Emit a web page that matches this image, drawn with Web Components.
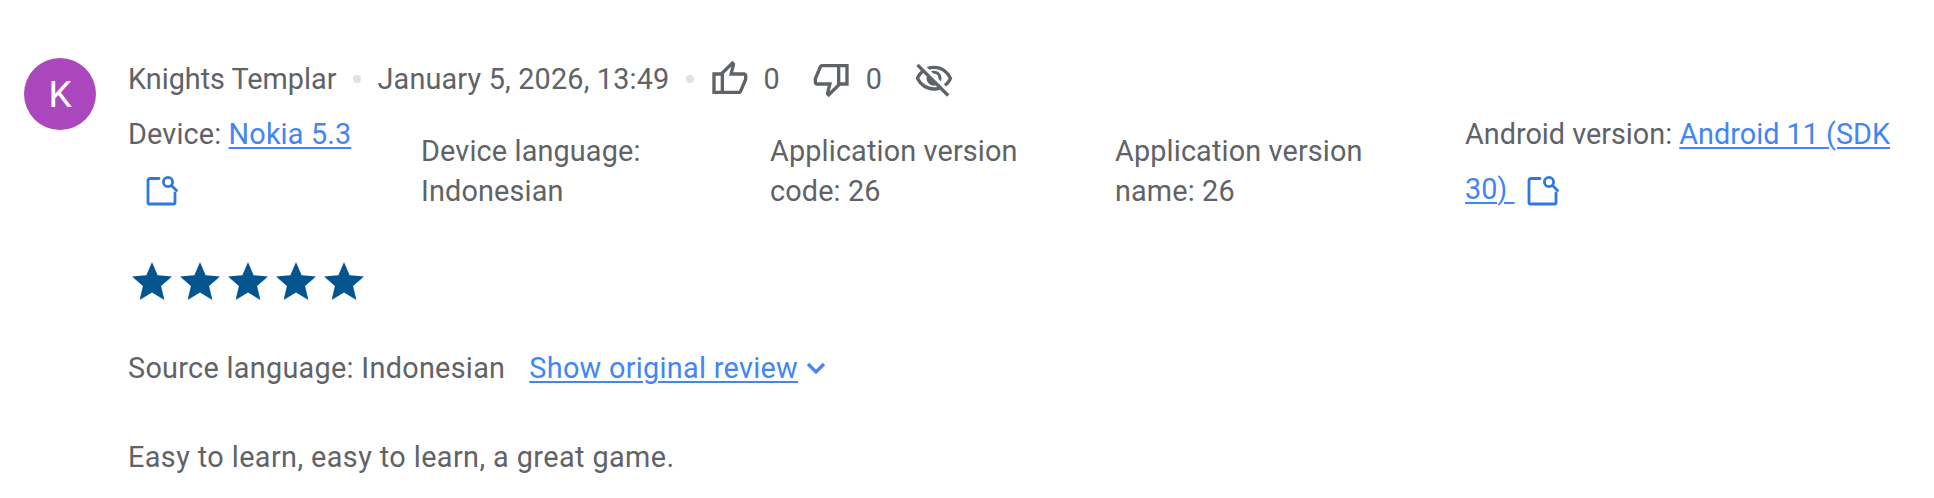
<!DOCTYPE html>
<html lang="en">
<head>
<meta charset="utf-8">
<title>Review</title>
<style>
  html, body { margin: 0; background: #fff; }
  body { font-family: Roboto, "Liberation Sans", sans-serif; color: #5f6368; }
</style>
</head>
<body>
<app-review
  author="Knights Templar"
  date="January 5, 2026, 13:49"
  likes="0"
  dislikes="0"
  stars="5"
  source="Indonesian">
  <meta-cell slot="meta" class="tall">Device: <a-link>Nokia 5.3 </a-link><search-icon></search-icon></meta-cell>
  <meta-cell slot="meta">Device language: Indonesian</meta-cell>
  <meta-cell slot="meta">Application version code: 26</meta-cell>
  <meta-cell slot="meta">Application version name: 26</meta-cell>
  <meta-cell slot="meta" class="tall last">Android version: <a-link>Android 11 (SDK 30) </a-link><search-icon style="--gap: 12px"></search-icon></meta-cell>
  Easy to learn, easy to learn, a great game.
</app-review>

<script>
const ICONS = {
  up: 'M720-120H280v-520l280-280 50 50q7 7 11.5 19t4.5 23v14l-44 174h258q32 0 56 24t24 56v80q0 7-2 15t-4 15L794-168q-9 20-30 34t-44 14Zm-360-80h360l120-280v-80H480l54-220-174 174v406Zm0-406v406-406Zm-80-34v80H160v360h120v80H80v-520h200Z',
  down: 'M240-840h440v520L400-40l-50-50q-7-7-11.5-19t-4.5-23v-14l44-174H120q-32 0-56-24t-24-56v-80q0-7 2-15t4-15l120-282q9-20 30-34t44-14Zm360 80H240L120-480v80h360l-54 220 174-174v-406Zm0 406v-406 406Zm80 34v-80h120v-360H680v-80h200v520H680Z',
  hidden: 'm644-428-58-58q9-47-27-88t-93-32l-58-58q17-8 34.5-12t37.5-4q75 0 127.5 52.5T660-500q0 20-4 37.5T644-428Zm128 126-58-56q38-29 67.5-63.5T832-500q-50-101-143.5-160.5T480-720q-29 0-57 4t-55 12l-62-62q41-17 84-25.5t90-8.5q151 0 269 83.5T920-500q-23 59-60.5 109.5T772-302Zm20 246L624-222q-35 11-70.5 16.5T480-200q-151 0-269-83.5T40-500q21-53 53-98.5t73-81.5L56-792l56-56 736 736-56 56ZM222-624q-29 26-53 57t-41 67q50 101 143.5 160.5T480-280q20 0 39-2.5t39-5.5l-36-38q-11 3-21 4.5t-21 1.5q-75 0-127.5-52.5T300-500q0-11 1.5-21t4.5-21l-84-82Z'
}

const icon = name => `<svg viewBox="0 -960 960 960" width="40" height="40" fill="#5f6368"><path d="${ICONS[name]}"/></svg>`

class ALink extends HTMLElement {
  constructor () {
    super()
    this.attachShadow({ mode: 'open' }).innerHTML = /*html*/`
    <style>
      :host { display: inline; color: #4285f4; text-decoration: underline; text-decoration-thickness: 2px; text-underline-offset: 3px; }
    </style>
    <slot></slot>`
  }
}

class SearchIcon extends HTMLElement {
  constructor () {
    super()
    this.attachShadow({ mode: 'open' }).innerHTML = /*html*/`
    <style>
      :host { display: inline-block; width: 32px; height: 32px; margin-left: var(--gap, 18px); vertical-align: -7px; }
      svg { display: block; }
    </style>
    <svg viewBox="0 0 32 32" width="32" height="32" fill="none" stroke="#2f78e4" stroke-width="2.8" stroke-linecap="round" stroke-linejoin="round">
      <path d="M13 4.500H4A2 2 0 0 0 2 6.500v22a1.500 1.500 0 0 0 1.500 1.500h24a1.500 1.500 0 0 0 1.500-1.500V19"/>
      <circle cx="22" cy="8" r="4.600"/>
      <path d="M25.500 11.500l5 5"/>
    </svg>`
  }
}

class MetaCell extends HTMLElement {
  constructor () {
    super()
    this.attachShadow({ mode: 'open' }).innerHTML = /*html*/`
    <style>
      :host { display: block; padding: 24px 36px 0 0; line-height: 40px; letter-spacing: .15px; }
      :host(.tall) { padding-top: 0; line-height: 55px; }
      :host(.last) { letter-spacing: 0; padding-right: 0; }
    </style>
    <slot></slot>`
  }
}

class AppReview extends HTMLElement {
  constructor () {
    super()
    this.shadow = this.attachShadow({ mode: 'open' })
  }

  connectedCallback () {
    const author = this.getAttribute('author')
    const date = this.getAttribute('date')
    const likes = this.getAttribute('likes')
    const dislikes = this.getAttribute('dislikes')
    const source = this.getAttribute('source')
    const stars = Number(this.getAttribute('stars'))
    const starSvg = '<svg viewBox="0 0 24 24" width="48" height="48" fill="#01558e"><path d="M12 17.27 18.180 21l-1.640-7.030L22 9.240l-7.190-.61L12 2 9.190 8.630 2 9.240l5.460 4.730L5.820 21z"/></svg>'

    this.shadow.innerHTML = /*html*/`
    <style>
      :host {
        display: flex;
        gap: 32px;
        padding: 58px 0 0 24px;
        font-size: 28.8px;
        color: #5f6368;
      }
      .avatar {
        align-items: center;
        background-color: #ab47bc;
        border-radius: 50%;
        color: #fff;
        display: flex;
        flex: none;
        font-size: 37px;
        height: 72px;
        justify-content: center;
        width: 72px;
      }
      .body { flex: 1; min-width: 0; }
      .head {
        align-items: center;
        display: flex;
        height: 42px;
      }
      .date { letter-spacing: .18px; }
      .dot {
        background-color: #dfe3e6;
        border-radius: 50%;
        flex: none;
        height: 8px;
        margin: 0 16px 0 17px;
        width: 8px;
      }
      .dot.last { margin-right: 15px; }
      .count { margin: 0 32px 0 14px; }
      .head svg { display: block; flex: none; }
      .meta {
        display: grid;
        grid-template-columns: 293px 349px 345px 350px 440px;
        margin-top: 7px;
      }
      .stars {
        display: flex;
        margin-top: 41px;
      }
      .stars svg { display: block; }
      .source {
        align-items: center;
        display: flex;
        letter-spacing: .3px;
        margin-top: 45px;
      }
      .show { align-items: center; display: flex; margin-left: 24px; }
      .show svg { display: block; margin-left: 2px; }
      .text { letter-spacing: .42px; margin-top: 55px; }
    </style>
    <div class="avatar">K</div>
    <div class="body">
      <div class="head">
        <span>${author}</span>
        <span class="dot"></span>
        <span class="date">${date}</span>
        <span class="dot last"></span>
        ${icon('up')}<span class="count">${likes}</span>
        ${icon('down')}<span class="count">${dislikes}</span>
        ${icon('hidden')}
      </div>
      <div class="meta"><slot name="meta"></slot></div>
      <div class="stars">${starSvg.repeat(stars)}</div>
      <div class="source">
        <span>Source language: ${source}</span>
        <span class="show"><a-link>Show original review</a-link>
          <svg viewBox="0 0 24 24" width="32" height="32" fill="none" stroke="#4285f4" stroke-width="2.4"><path d="M6 9l6 6 6-6"/></svg>
        </span>
      </div>
      <div class="text"><slot></slot></div>
    </div>`
  }
}

customElements.define('a-link', ALink)
customElements.define('search-icon', SearchIcon)
customElements.define('meta-cell', MetaCell)
customElements.define('app-review', AppReview)
</script>
</body>
</html>
